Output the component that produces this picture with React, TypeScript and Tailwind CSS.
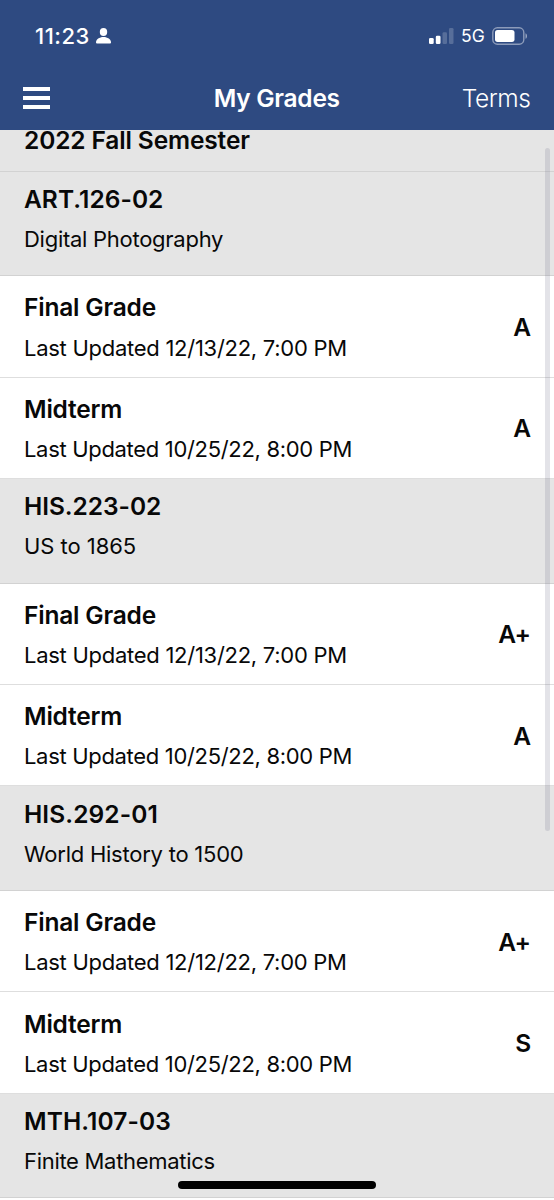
type Grade = { name: string; updated: string; grade: string; tracking: string };
type Course = { code: string; title: string; codeTracking: string; titleTracking: string; grades: Grade[] };

const midterm = (grade: string): Grade => ({
  name: 'Midterm',
  updated: '10/25/22, 8:00 PM',
  grade,
  tracking: 'tracking-[-0.32px]',
});
const finalGrade = (date: string, grade: string): Grade => ({
  name: 'Final Grade',
  updated: `${date}, 7:00 PM`,
  grade,
  tracking: 'tracking-[-0.27px]',
});

const courses: Course[] = [
  {
    code: 'ART.126-02',
    title: 'Digital Photography',
    codeTracking: 'tracking-[0.05px]',
    titleTracking: 'tracking-[-0.27px]',
    grades: [finalGrade('12/13/22', 'A'), midterm('A')],
  },
  {
    code: 'HIS.223-02',
    title: 'US to 1865',
    codeTracking: 'tracking-[-0.05px]',
    titleTracking: 'tracking-[-0.05px]',
    grades: [finalGrade('12/13/22', 'A+'), midterm('A')],
  },
  {
    code: 'HIS.292-01',
    title: 'World History to 1500',
    codeTracking: 'tracking-[0.1px]',
    titleTracking: 'tracking-[-0.24px]',
    grades: [finalGrade('12/12/22', 'A+'), midterm('S')],
  },
  {
    code: 'MTH.107-03',
    title: 'Finite Mathematics',
    codeTracking: 'tracking-[0.1px]',
    titleTracking: 'tracking-[-0.3px]',
    grades: [],
  },
];

function StatusBar() {
  return (
    <div className="flex h-[66px] items-start justify-between pr-[26px] pl-[35px] pt-[20px]">
      <div className="flex items-center">
        <span className="w-[54px] text-[22px] leading-8 font-medium tracking-[0.5px] whitespace-nowrap">11:23</span>
        <svg className="ml-[7px] h-4 w-[15px]" viewBox="0 0 15 16" fill="currentColor">
          <ellipse cx="7.5" cy="4" rx="3.7" ry="4" />
          <path d="M0 14.2C0 11.3 3.4 9 7.5 9S15 11.3 15 14.2C15 15.2 14.5 15.5 13.5 15.5H1.5C.5 15.5 0 15.2 0 14.2Z" />
        </svg>
      </div>
      <div className="flex h-8 items-center">
        <svg className="h-4 w-[25px]" viewBox="0 0 25 16" fill="currentColor">
          <rect x="0" y="10" width="4.7" height="6" rx="1.3" />
          <rect x="6.8" y="7.8" width="4.7" height="8.2" rx="1.3" />
          <rect x="13.5" y="4.2" width="4.5" height="11.8" rx="1.3" opacity=".2" />
          <rect x="20" y="0" width="4.5" height="16" rx="1.3" opacity=".2" />
        </svg>
        <span className="ml-[7px] text-[17.5px] leading-8 tracking-[0.1px]">5G</span>
        <svg className="ml-[7px] h-[18px] w-[36px]" viewBox="0 0 36 18" fill="none">
          <rect x=".8" y=".8" width="31" height="16.4" rx="4.6" stroke="white" strokeOpacity=".45" strokeWidth="1.4" />
          <rect x="3" y="2.9" width="19.5" height="12" rx="2.6" fill="white" />
          <path d="M33.5 6.2C35.5 7 35.5 11 33.5 11.8Z" fill="white" fillOpacity=".5" />
        </svg>
      </div>
    </div>
  );
}

export default function App() {
  return (
    <div className="relative flex h-[1200px] w-[554px] flex-col overflow-hidden bg-white font-['Inter',sans-serif] text-[#080808]">
      <header className="h-[130px] shrink-0 bg-[#2e4a81] text-white">
        <StatusBar />
        <div className="grid h-[63px] grid-cols-[1fr_auto_1fr] items-center pr-[23.5px] pl-[23px]">
          <button className="flex w-[27px] flex-col gap-[5px]" aria-label="Menu">
            <span className="h-1 w-full bg-white" />
            <span className="h-1 w-full bg-white" />
            <span className="h-1 w-full bg-white" />
          </button>
          <h1 className="text-[24.5px] leading-8 font-semibold tracking-[-0.27px]">My Grades</h1>
          <button className="justify-self-end text-[24.5px] leading-8 font-[350] tracking-[-0.45px]">Terms</button>
        </div>
      </header>
      <main className="min-h-0 flex-1 overflow-hidden bg-white">
        <div className="flex h-[41.6px] items-start border-b border-[#d2d2d2] bg-[#e5e5e5] px-6">
          <h2 className="-mt-[6px] text-[24.5px] leading-8 font-semibold tracking-[-0.13px]">2022 Fall Semester</h2>
        </div>
        {courses.map((course) => (
          <section key={course.code}>
            <div className="h-[104.6px] border-b border-[#d2d2d2] bg-[#e5e5e5] px-6 pt-[11.3px]">
              <h3 className={`text-[24.5px] leading-8 font-semibold ${course.codeTracking}`}>{course.code}</h3>
              <p className={`pt-2 text-[22px] leading-8 ${course.titleTracking}`}>{course.title}</p>
            </div>
            {course.grades.map((item) => (
              <div
                key={item.name}
                className="flex h-[101.4px] items-center justify-between border-b border-[#dedede] bg-white pr-[23.5px] pl-6 pt-[2.4px]"
              >
                <div>
                  <h4 className="text-[24.5px] leading-8 font-semibold tracking-[-0.2px]">{item.name}</h4>
                  <p className={`pt-[8.3px] text-[22px] leading-8 ${item.tracking}`}>Last Updated {item.updated}</p>
                </div>
                <span className="-mt-[1px] text-[24.5px] leading-8 font-semibold tracking-[-0.6px]">{item.grade}</span>
              </div>
            ))}
          </section>
        ))}
      </main>
      <div className="absolute top-[148px] right-[4px] h-[683px] w-[5px] rounded-full bg-[#73738c]/20" />
      <div className="absolute bottom-[11px] left-[178px] h-[8px] w-[198px] rounded-full bg-black" />
    </div>
  );
}
